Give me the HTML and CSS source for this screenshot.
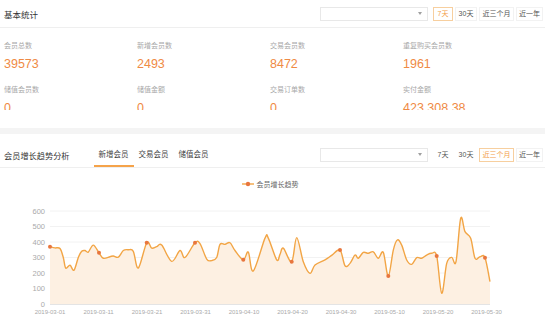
FILE: index.html
```html
<!DOCTYPE html>
<html lang="zh-CN">
<head>
<meta charset="utf-8">
<title>会员统计</title>
<link rel="stylesheet" href="styles.css">
</head>
<body>
<div class="page">
  <section class="panel basic">
    <div class="panel-head basic-head">
      <h2 class="panel-title">基本统计</h2>
      <div class="filters">
        <div class="select"><span class="arrow"></span></div>
        <div class="ranges">
          <span class="range r7 active">7天</span>
          <span class="range r30">30天</span>
          <span class="range r90">近三个月</span>
          <span class="range r365">近一年</span>
        </div>
      </div>
    </div>
    <div class="stats">
      <div class="stat"><div class="stat-label">会员总数</div><div class="stat-value">39573</div></div>
      <div class="stat"><div class="stat-label">新增会员数</div><div class="stat-value">2493</div></div>
      <div class="stat"><div class="stat-label">交易会员数</div><div class="stat-value">8472</div></div>
      <div class="stat"><div class="stat-label">重复购买会员数</div><div class="stat-value">1961</div></div>
      <div class="stat"><div class="stat-label">储值会员数</div><div class="stat-value">0</div></div>
      <div class="stat"><div class="stat-label">储值金额</div><div class="stat-value">0</div></div>
      <div class="stat"><div class="stat-label">交易订单数</div><div class="stat-value">0</div></div>
      <div class="stat"><div class="stat-label">实付金额</div><div class="stat-value">423,308.38</div></div>
    </div>
  </section>
  <div class="band"></div>
  <section class="panel trend">
    <div class="panel-head trend-head">
      <h2 class="panel-title trend-title">会员增长趋势分析</h2>
      <nav class="tabs">
        <span class="tab active">新增会员</span>
        <span class="tab">交易会员</span>
        <span class="tab">储值会员</span>
      </nav>
      <div class="filters">
        <div class="select"><span class="arrow"></span></div>
        <div class="ranges">
          <span class="range r7 plain">7天</span>
          <span class="range r30 plain">30天</span>
          <span class="range r90 active">近三个月</span>
          <span class="range r365">近一年</span>
        </div>
      </div>
    </div>
    <div class="legend">
      <svg class="legend-mark" width="12" height="6" viewBox="0 0 12 6"><line x1="0" y1="3" x2="12" y2="3" stroke="#f2a545" stroke-width="1.4"/><circle cx="6" cy="3" r="2.2" fill="#e8763e"/></svg>
      <span>会员增长趋势</span>
    </div>
    <svg class="chart" width="545" height="138" viewBox="0 190 545 138">
      <g class="grid" stroke="#f2f2f2" stroke-width="1">
        <line x1="50" y1="288.5" x2="490" y2="288.5"/>
        <line x1="50" y1="273" x2="490" y2="273"/>
        <line x1="50" y1="257.5" x2="490" y2="257.5"/>
        <line x1="50" y1="242" x2="490" y2="242"/>
        <line x1="50" y1="226.5" x2="490" y2="226.5"/>
        <line x1="50" y1="211" x2="490" y2="211"/>
      </g>
      <path id="area" fill="#fdf0e2" d=""/>
      <line x1="50" y1="304.5" x2="490" y2="304.5" stroke="#e4e4e4" stroke-width="1"/>
      <g class="ylabels" font-size="7.5" fill="#aaa" text-anchor="end">
        <text x="45" y="306.7">0</text>
        <text x="45" y="291.2">100</text>
        <text x="45" y="275.7">200</text>
        <text x="45" y="260.2">300</text>
        <text x="45" y="244.7">400</text>
        <text x="45" y="229.2">500</text>
        <text x="45" y="213.7">600</text>
      </g>
      <g class="xlabels" font-size="6" fill="#aaa" text-anchor="middle">
        <text x="50" y="314">2019-03-01</text>
        <text x="98.5" y="314">2019-03-11</text>
        <text x="147" y="314">2019-03-21</text>
        <text x="195.5" y="314">2019-03-31</text>
        <text x="244" y="314">2019-04-10</text>
        <text x="292.5" y="314">2019-04-20</text>
        <text x="341" y="314">2019-04-30</text>
        <text x="389.5" y="314">2019-05-10</text>
        <text x="438" y="314">2019-05-20</text>
        <text x="486.5" y="314">2019-05-30</text>
      </g>
      <path id="line" fill="none" stroke="#f2a545" stroke-width="1.4" stroke-linejoin="round" d=""/>
      <g class="markers" fill="#e8763e">
        <circle cx="50" cy="246.65" r="2"/>
        <circle cx="99" cy="252.85" r="2"/>
        <circle cx="146.7" cy="242.8" r="2"/>
        <circle cx="195" cy="242.8" r="2"/>
        <circle cx="243.3" cy="259.8" r="2"/>
        <circle cx="291.7" cy="261.7" r="2"/>
        <circle cx="340" cy="250.1" r="2"/>
        <circle cx="388.3" cy="276.1" r="2"/>
        <circle cx="436.7" cy="255.95" r="2"/>
        <circle cx="485" cy="257.7" r="2"/>
      </g>
    </svg>
  </section>
</div>
<script src="chart.js"></script>
</body>
</html>
```

FILE: styles.css
```css
* {
  box-sizing: border-box;
  margin: 0;
  padding: 0;
}

html, body {
  background: #fff;
}

body {
  font-family: "Liberation Sans", "Noto Sans CJK SC", sans-serif;
  color: #333;
  width: 560px;
  height: 328px;
  overflow: hidden;
}

.page {
  width: 545px;
}

.panel-head {
  display: flex;
  align-items: center;
  border-bottom: 1px solid #efefef;
  padding: 0 2px 0 4px;
}

.basic-head {
  height: 28px;
}

.trend-head {
  height: 34px;
  padding-top: 8px;
}

.panel-title {
  font-size: 8.5px;
  font-weight: normal;
  color: #333;
  white-space: nowrap;
}

.trend-title {
  font-size: 8.2px;
}

.filters {
  margin-left: auto;
  display: flex;
  align-items: center;
  gap: 5px;
}

.select {
  width: 108px;
  height: 14px;
  border: 1px solid #e8e8e8;
  display: flex;
  align-items: center;
  justify-content: flex-end;
  padding-right: 5px;
}

.arrow {
  width: 0;
  height: 0;
  border-left: 2px solid transparent;
  border-right: 2px solid transparent;
  border-top: 3px solid #a0a0a0;
}

.ranges {
  display: flex;
  gap: 2px;
}

.range {
  height: 14px;
  line-height: 12px;
  border: 1px solid #f2f2f2;
  font-size: 7px;
  color: #555;
  text-align: center;
  white-space: nowrap;
}

.range.plain {
  border-color: transparent;
}

.range.active {
  border-color: #f7cf9f;
  color: #f3a14a;
}

.r7 { width: 20px; }
.r30 { width: 22px; }
.r90 { width: 35px; }
.r365 { width: 27px; }

.stats {
  display: grid;
  grid-template-columns: repeat(4, 133px);
  row-gap: 12px;
  padding: 12px 0 0 4px;
  height: 82px;
  overflow: hidden;
  margin-bottom: 18px;
}

.stat-label {
  font-size: 7px;
  line-height: 12px;
  color: #a8a8a8;
  margin-bottom: 4px;
  white-space: nowrap;
}

.stat-value {
  font-size: 12.5px;
  line-height: 16px;
  color: #ef8a45;
  white-space: nowrap;
}

.band {
  height: 6px;
  background: #f4f4f4;
}

.tabs {
  display: flex;
  margin-left: 24px;
  align-self: stretch;
}

.tab {
  position: relative;
  height: 25px;
  line-height: 25px;
  padding: 0 5px;
  font-size: 7.5px;
  color: #444;
  white-space: nowrap;
}

.tab.active::after {
  content: "";
  position: absolute;
  left: 0;
  right: 0;
  bottom: 0;
  height: 2px;
  background: #f5a34a;
}

.legend {
  display: flex;
  justify-content: center;
  align-items: center;
  gap: 3px;
  height: 22px;
  padding-top: 10px;
  padding-right: 5px;
  font-size: 7px;
  color: #666;
}

.legend-mark {
  display: block;
}

.chart {
  display: block;
  font-family: "Liberation Sans", sans-serif;
}
```

FILE: chart.js
```js
(function () {
  var data = [
    [50,370],[55,362],[60,358],[63.3,300],[65.7,232],[70,250],[74,218],[78.3,300],[81.7,340],[85,345],
    [88.3,335],[93.3,380],[99,330],[103.3,295],[110,305],[113.3,310],[118.3,302],[123.3,345],[128.3,350],
    [133.3,340],[138.3,232],[146.7,395],[151.7,360],[156.7,370],[161.7,380],[171.7,275],[180,345],[185,300],
    [195,395],[200,390],[206.7,290],[211.7,280],[216.7,300],[220,385],[225,385],[230,395],[235,345],
    [243.3,285],[248.3,335],[253.3,213],[265,425],[268.3,425],[276.7,285],[280,320],[283.3,360],[291.7,273],
    [296.7,428],[303.3,273],[310,198],[315,252],[325,285],[332,315],[340,348],[345,247],[350,262],[355,316],
    [358.3,295],[363.3,333],[368.3,327],[373.3,337],[378.3,295],[383.3,333],[388.3,180],[393.3,348],
    [397.3,413],[401.7,380],[406.7,284],[411.7,256],[416.7,299],[421.7,295],[426.7,316],[431.7,327],
    [436.7,310],[441.7,69],[446.7,262],[451.7,301],[456,273],[460.7,553],[465,467],[470.7,424],[475,295],
    [480,305],[485,299],[490,144]
  ];
  function y(v) { return 304 - v * 0.155; }
  var P = data.map(function (p) { return [p[0], y(p[1])]; });
  function f(n) { return Math.round(n * 100) / 100; }
  var d = 'M' + f(P[0][0]) + ',' + f(P[0][1]);
  for (var i = 0; i < P.length - 1; i++) {
    var p0 = P[i - 1] || P[i], p1 = P[i], p2 = P[i + 1], p3 = P[i + 2] || P[i + 1];
    var c1x = p1[0] + (p2[0] - p0[0]) / 6, c1y = p1[1] + (p2[1] - p0[1]) / 6;
    var c2x = p2[0] - (p3[0] - p1[0]) / 6, c2y = p2[1] - (p3[1] - p1[1]) / 6;
    c1x = Math.min(Math.max(c1x, p1[0]), p2[0]);
    c2x = Math.min(Math.max(c2x, p1[0]), p2[0]);
    d += ' C' + f(c1x) + ',' + f(c1y) + ' ' + f(c2x) + ',' + f(c2y) + ' ' + f(p2[0]) + ',' + f(p2[1]);
  }
  document.getElementById('line').setAttribute('d', d);
  document.getElementById('area').setAttribute('d', d + ' L490,304 L50,304 Z');
})();
```
